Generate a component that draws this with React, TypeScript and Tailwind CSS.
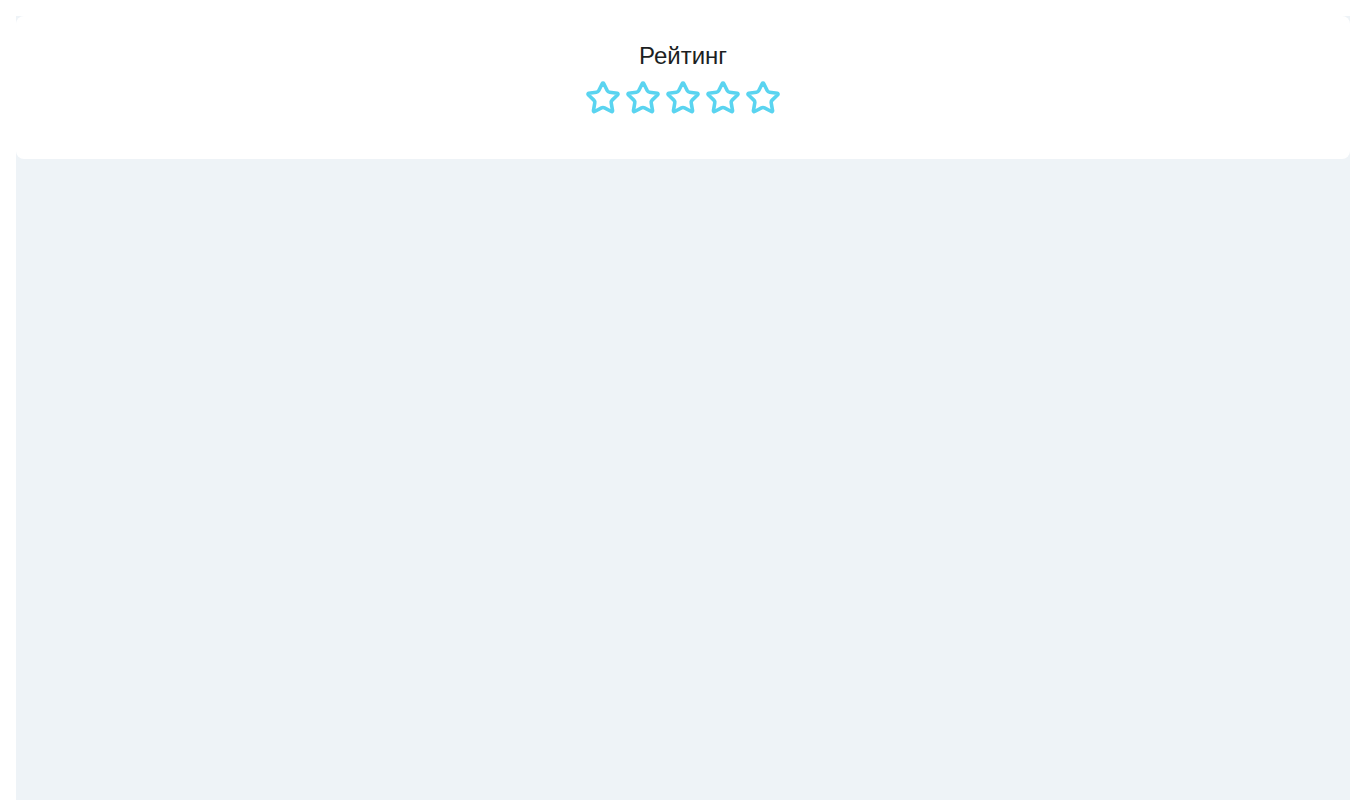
import { Star } from "lucide-react";

export default function App() {
  return (
    <div className="min-h-screen bg-white p-4 pb-0 font-['Liberation_Sans',Arial,sans-serif]">
      <main className="min-h-[784px] bg-[#eef3f7]">
        <section className="flex flex-col items-center rounded-lg bg-white pt-6 pb-[43px]">
          <h1 className="text-2xl leading-8 text-[#1c1f23]">Рейтинг</h1>
          <div className="mt-2 flex gap-1">
            {[1, 2, 3, 4, 5].map((n) => (
              <Star key={n} size={36} strokeWidth={2.4} className="text-[#5ad4f0]" aria-hidden />
            ))}
          </div>
        </section>
      </main>
    </div>
  );
}
